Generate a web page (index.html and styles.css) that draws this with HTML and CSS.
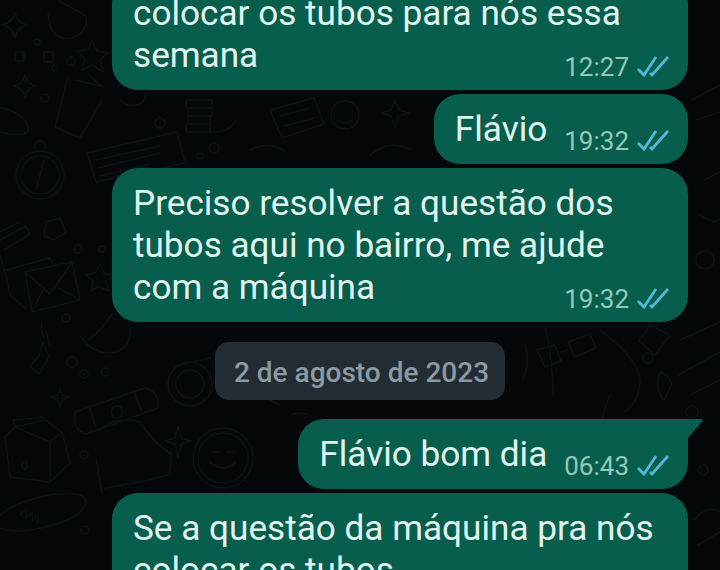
FILE: index.html
```html
<!DOCTYPE html>
<html lang="pt">
<head>
<meta charset="utf-8">
<title>Conversa</title>
<link rel="stylesheet" href="styles.css">
</head>
<body>
<main class="chat">
  <svg class="doodles" width="720" height="570" viewBox="0 0 720 570" fill="none" aria-hidden="true">
    <g class="doodle-line">
      <!-- top-left -->
      <path d="M15 12 q2 11 13 13 q-11 2 -13 13 q-2 -11 -13 -13 q11 -2 13 -13 Z"/>
      <path d="M48 14 q2 18 10 22 q14 6 24 -4 q6 -8 4 -14 M58 0 q14 8 28 16"/>
      <rect x="15" y="52" width="9" height="9"/><rect x="44" y="52" width="9" height="10"/>
      <circle cx="37" cy="42" r="3"/><circle cx="71" cy="61" r="4"/><circle cx="55" cy="68" r="3"/>
      <path d="M92 40 l5 11 l11 2 l-8 7 l3 12 l-11 -7 l-10 5 l3 -11 l-8 -8 l11 -1 Z"/>
      <path d="M25 75 q2 9 11 11 q-9 2 -11 11 q-2 -9 -11 -11 q9 -2 11 -11 Z"/>
      <circle cx="45" cy="98" r="4"/>
      <!-- compass column -->
      <circle cx="40" cy="175" r="24"/><circle cx="40" cy="175" r="19"/><circle cx="40" cy="146" r="5"/>
      <path d="M44 160 L36 190 L40 176 Z"/>
      <path d="M68 77 L55 127 L80 138 L102 100 M74 80 L102 86 L90 76"/>
      <path d="M0 108 C16 110 30 120 28 132 C20 136 8 134 0 132"/>
      <!-- middle open strip -->
      <path d="M87 153 L177 132 L185 163 L96 182 Z M96 160 L160 146 M98 168 L160 153 M100 176 L150 164"/>
      <path d="M186 100 h26 v8 h-26 Z M188 108 h24 v8 h-24 Z M188 116 h22 v8 h-22 Z M186 124 h24 v8 h-24 Z"/>
      <path d="M210 132 q18 2 26 -12 M120 100 q8 8 20 4 q8 -6 6 -14"/>
      <circle cx="160" cy="123" r="5"/><circle cx="214" cy="148" r="5"/><circle cx="200" cy="156" r="3"/>
      <path d="M270 110 l44 -12 l10 26 l-42 14 Z M280 116 l30 -8 M284 126 l30 -8"/>
      <circle cx="345" cy="115" r="14"/><path d="M338 120 q7 6 14 0"/>
      <path d="M395 100 l4 10 l10 3 l-10 3 l-4 12 l-4 -12 l-10 -3 l10 -3 Z"/>
      <path d="M250 150 q18 -10 36 2 M370 155 q18 -16 40 -6"/>
      <!-- envelope -->
      <path d="M0 255 L6 277 L10 295 L25 308 M6 270 L50 258 L54 266"/>
      <path d="M25 272 L72 262 L80 300 L32 312 Z M25 272 L50 294 L72 262 M32 312 L44 288 M80 300 L58 288"/>
      <path d="M100 264 l4 9 l9 2 l-7 6 l2 10 l-9 -5 l-8 5 l2 -10 l-7 -6 l9 -2 Z"/>
      <circle cx="78" cy="249" r="4"/><circle cx="102" cy="249" r="3"/><circle cx="66" cy="318" r="4"/>
      <path d="M0 240 L26 226 L30 234 L4 250 M0 232 L20 222"/>
      <path d="M46 222 L60 218 L66 232 L54 240 L44 236 Z"/>
      <path d="M42 322 q-2 8 2 16 M88 340 q14 -10 24 -26"/>
      <!-- lower left -->
      <path d="M5 437 L10 477 L50 482 L70 463 L62 432 L45 420 L15 427 Z M15 427 L50 442 L50 482 M50 442 L62 432"/>
      <path d="M13 420 L45 417 L45 420 M13 420 L15 427"/>
      <path d="M23 462 q-3 6 2 8 q4 -2 1 -8"/>
      <path d="M75 412 L145 388 Q160 392 158 408 L86 434 Q72 430 75 412 Z M90 408 L96 428 M134 392 L142 412"/>
      <circle cx="117" cy="412" r="6"/>
      <path d="M0 515 C25 495 75 488 85 498 C90 515 60 525 30 530 C15 532 5 530 0 528"/>
      <path d="M20 515 q8 -12 6 4 q8 -12 6 2 q8 -12 6 2"/>
      <path d="M100 430 q15 -15 40 -8 q16 24 32 32 l-2 20 l-20 6 l-45 8 M96 458 L102 494"/>
      <circle cx="190" cy="384" r="14"/><circle cx="190" cy="384" r="22"/>
      <path d="M176 366 L210 358"/>
      <circle cx="223" cy="458" r="30"/><circle cx="223" cy="458" r="25"/><path d="M210 462 q13 12 26 0 M212 452 h7 M226 452 h7"/>
      <path d="M178 426 l3 12 l10 3 l-10 3 l-3 14 l-3 -14 l-10 -3 l10 -3 Z"/>
      <path d="M30 366 l9 -10 l4 -14 l6 14 l-10 18 Z M50 345 l-4 -14"/>
      <path d="M60 388 l2 7 l7 2 l-7 2 l-2 9 l-2 -9 l-7 -2 l7 -2 Z"/>
      <circle cx="72" cy="362" r="5"/><circle cx="84" cy="374" r="4"/><circle cx="105" cy="372" r="4"/>
      <circle cx="84" cy="455" r="4"/><circle cx="85" cy="530" r="4"/>
      <path d="M80 336 q14 20 35 16 q15 -4 15 -20"/>
      <!-- right strip -->
      <path d="M537 350 L555 345 L561 361 L545 367 Z M568 342 L590 334 L596 348 L574 357 Z M561 352 L568 350"/>
      <path d="M525 345 q6 18 -2 34 M545 325 q8 36 8 70"/>
      <path d="M600 330 q40 30 40 52 q-2 22 -16 30 M610 395 q-6 14 -8 25"/>
      <path d="M650 325 l20 10 l-15 20 l-16 -14 Z"/>
      <circle cx="648" cy="358" r="5"/><path d="M660 372 q-6 16 4 28 l8 -16 q-4 -10 -12 -12"/>
      <path d="M680 340 L720 322 M678 375 L720 352 M690 395 L720 380"/>
      <circle cx="692" cy="412" r="6"/>
      <path d="M692 100 L720 85 M696 120 L720 112 M700 215 q14 10 20 4"/>
      <circle cx="705" cy="260" r="9"/><circle cx="703" cy="470" r="5"/>
      <path d="M694 520 q14 -16 26 -8 M698 545 L720 532 M704 180 l16 -8"/>
      <path d="M300 348 q-22 6 -30 26 M260 395 l20 10 M310 415 q-10 -4 -18 0"/>
    </g>
  </svg>

  <article class="bubble bubble-wide bubble-first">
    <p class="msg">colocar os tubos para nós essa<br>semana</p>
    <div class="meta"><time class="time">12:27</time><svg class="ticks" width="33" height="22" viewBox="0 0 33 22" fill="none"><path d="M1 13 L7 19 L19 1 M13 17 L15 19 L31 1"/></svg></div>
  </article>

  <article class="bubble">
    <p class="msg">Flávio</p>
    <div class="meta"><time class="time">19:32</time><svg class="ticks" width="33" height="22" viewBox="0 0 33 22" fill="none"><path d="M1 13 L7 19 L19 1 M13 17 L15 19 L31 1"/></svg></div>
  </article>

  <article class="bubble bubble-wide">
    <p class="msg">Preciso resolver a questão dos<br>tubos aqui no bairro, me ajude<br>com a máquina</p>
    <div class="meta"><time class="time">19:32</time><svg class="ticks" width="33" height="22" viewBox="0 0 33 22" fill="none"><path d="M1 13 L7 19 L19 1 M13 17 L15 19 L31 1"/></svg></div>
  </article>

  <div class="date">2 de agosto de 2023</div>

  <article class="bubble bubble-tail">
    <p class="msg">Flávio bom dia</p>
    <div class="meta"><time class="time">06:43</time><svg class="ticks" width="33" height="22" viewBox="0 0 33 22" fill="none"><path d="M1 13 L7 19 L19 1 M13 17 L15 19 L31 1"/></svg></div>
  </article>

  <article class="bubble bubble-wide">
    <p class="msg">Se a questão da máquina pra nós<br>colocar os tubos</p>
  </article>
</main>
</body>
</html>
```

FILE: styles.css
```css
* { box-sizing: border-box; }

html, body {
  margin: 0;
  padding: 0;
  background: #04080b;
}

.chat {
  position: relative;
  width: 720px;
  height: 570px;
  overflow: hidden;
  display: flex;
  flex-direction: column;
  align-items: flex-end;
  gap: 4px;
  background: #04080b;
  font-family: Roboto, "Liberation Sans", sans-serif;
}

.doodles {
  position: absolute;
  left: 0;
  top: 0;
}

.doodle-line {
  stroke: #0d1215;
  stroke-width: 1.5;
  stroke-linejoin: round;
  stroke-linecap: round;
}

.bubble {
  position: relative;
  flex: none;
  display: flex;
  align-items: flex-end;
  gap: 17px;
  margin-right: 32px;
  padding: 14px 18px 14px 21px;
  border-radius: 26px;
  background: #085e4d;
}

.bubble-wide {
  width: 576px;
}

.bubble-wide .msg {
  flex: 1;
  min-width: 0;
}

.bubble-first {
  margin-top: -22px;
}

.bubble-tail {
  border-top-right-radius: 0;
}

.bubble-tail::after {
  content: "";
  position: absolute;
  top: 0;
  left: 100%;
  width: 15px;
  height: 19px;
  background: #085e4d;
  clip-path: polygon(0 0, 88% 0, 100% 8%, 0 100%);
}

.msg {
  margin: 0;
  color: #e0f3ee;
  font-size: 35.15px;
  line-height: 42px;
  white-space: nowrap;
}

.meta {
  flex: none;
  display: flex;
  align-items: center;
  gap: 8px;
  height: 30px;
  margin-bottom: -6px;
}

.time {
  color: #93c9ba;
  font-size: 26px;
  line-height: 30px;
}

.ticks {
  display: block;
  stroke: #55b7d8;
  stroke-width: 2.8;
}

.date {
  position: relative;
  align-self: center;
  flex: none;
  margin: 16px 0 15px;
  padding: 0 16px 0 19px;
  height: 58px;
  border-radius: 14px;
  background: #232c33;
  color: #8b99a3;
  font-size: 28px;
  font-weight: 500;
  line-height: 61px;
  white-space: nowrap;
}
```
